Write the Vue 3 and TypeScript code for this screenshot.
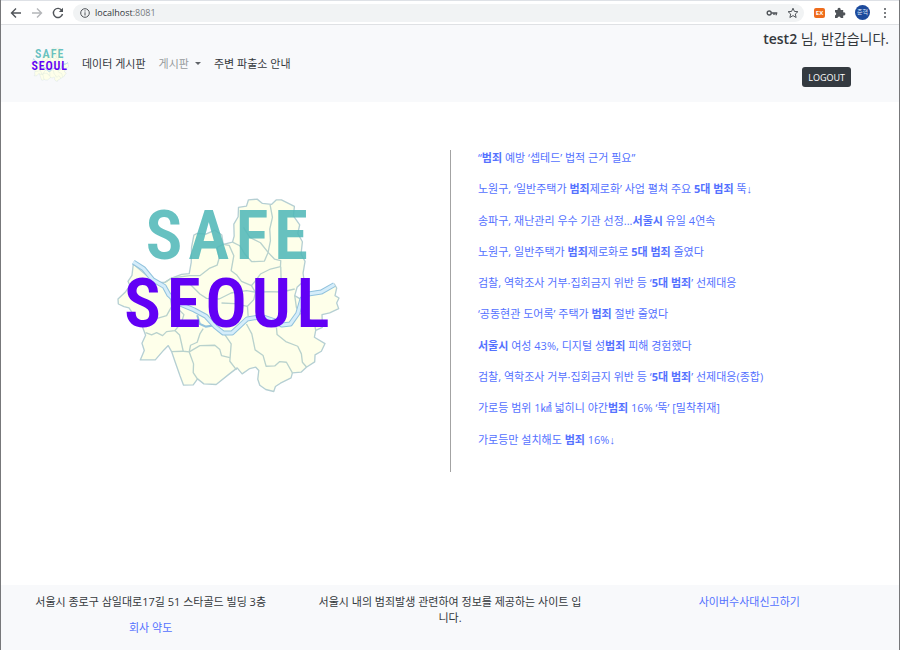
<script setup lang="ts">
import { computed, defineComponent, h, ref } from 'vue'

interface Part {
  text: string
  strong?: boolean
}

/* Splits a headline on *marked* keywords. */
function parse(line: string): Part[] {
  return line
    .split('*')
    .map((text, i) => ({ text, strong: i % 2 === 1 }))
    .filter((p) => p.text.length > 0)
}

const headlines: Part[][] = [
  '“*범죄* 예방 ‘셉테드’ 법적 근거 필요”',
  '노원구, ‘일반주택가 *범죄*제로화’ 사업 펼쳐 주요 *5대 범죄* 뚝↓',
  '송파구, 재난관리 우수 기관 선정...*서울시* 유일 4연속',
  '노원구, 일반주택가 *범죄*제로화로 *5대 범죄* 줄였다',
  '검찰, 역학조사 거부·집회금지 위반 등 ‘*5대 범죄*’ 선제대응',
  '‘공동현관 도어록’ 주택가 *범죄* 절반 줄였다',
  '*서울시* 여성 43%, 디지털 성*범죄* 피해 경험했다',
  '검찰, 역학조사 거부·집회금지 위반 등 ‘*5대 범죄*’ 선제대응(종합)',
  '가로등 범위 1㎢ 넓히니 야간*범죄* 16% ‘뚝’ [밀착취재]',
  '가로등만 설치해도 *범죄* 16%↓',
].map(parse)

const address = ref('localhost:8081')
const host = computed(() => address.value.split(':')[0])
const rest = computed(() => address.value.slice(host.value.length))

const land =
  'M100 250L135 280L165 305L195 305L215 292L245 281L268 279L274 245L275 200L282 163L292 158L318 160L345 148L366 163L370 191L398 184L403 166L402 130L415 108L416 80L440 76L446 57L472 55L488 68L515 71L530 57L545 57L584 77L581 105L600 132L594 158L608 183L604 220L616 242L610 277L613 300L592 320L585 345L610 360L640 334L675 328L704 310L711 322L706 345L718 352L711 367L717 384L690 397L667 402L668 440L648 449L644 470L676 489L665 512L646 523L645 544L620 560L604 575L578 577L574 592L542 608L527 618L522 633L498 627L480 614L474 596L477 570L468 560L450 564L427 580L412 562L385 583L349 612L312 610L293 595L280 613L251 614L240 585L226 545L215 513L205 495L192 508L166 538L121 538L133 510L126 488L137 464L128 440L104 407L87 382L72 378L55 370L54 355L77 333L90 315L84 302L96 284Z'

const districts: string[] = [
  'M195 305L215 292L270 285L300 285L330 262L352 253L358 232L352 200L370 191',
  'M370 191L388 194L402 225L394 270L410 282L425 302L455 315L465 303L482 280L512 265L542 258L543 240L524 235L505 215L482 186L450 170L431 140',
  'M398 184L420 195L435 220L456 243L494 241L505 215L512 180L510 145L518 110L511 72',
  'M270 310L300 340L320 353L358 355L394 337L440 330L470 335L505 333L545 334L585 325',
  'M543 258L544 295L555 334',
  'M455 315L467 335L462 357L443 377L445 407',
  'M365 367L405 369L443 377M470 335L485 350L480 405',
  'M210 345L215 378L200 405L172 413L150 407',
  'M215 378L240 390L252 402L245 425L225 450L200 453L188 465L170 456L155 463L137 456',
  'M225 450L239 463L244 485L250 512L268 514L300 495L345 494L360 507L365 525L390 531',
  'M215 513L250 512M268 514L272 494L292 485L300 460L310 444M268 514L281 550L280 576L294 597',
  'M375 462L394 490L390 542L410 568',
  'M440 430L456 460L466 508L490 525L499 557L525 556L540 543L560 545L578 577',
  'M530 440L532 462L558 483L594 497L605 520L608 545L621 560',
  'M585 345L590 380L600 398L644 425L648 449',
]

const river =
  'M100 244L131 264L158 297L193 317L207 343L235 368L283 388L318 407L346 438L370 457L397 457L442 415L487 408L520 419L546 433L572 430L594 399L607 354L626 340L665 334L704 312'

/* Seoul district map with the wordmark on top, shared by header and main view. */
const SafeSeoul = defineComponent({
  name: 'SafeSeoul',
  setup() {
    return () =>
      h('svg', { viewBox: '48 10 676 630', role: 'img', 'aria-label': 'SAFE SEOUL' }, [
        h('path', { d: land, fill: '#feffea', stroke: '#b5cfd3', 'stroke-width': 4, 'stroke-linejoin': 'round' }),
        ...districts.map((d) =>
          h('path', { d, fill: 'none', stroke: '#b9d2cd', 'stroke-width': 4, 'stroke-linejoin': 'round' }),
        ),
        h('path', { d: 'M292 404L300 430L318 438L346 434', fill: 'none', stroke: '#91c2dd', 'stroke-width': 6 }),
        h('path', { d: river, fill: 'none', stroke: '#91c2dd', 'stroke-width': 15, 'stroke-linejoin': 'round' }),
        h('path', { d: river, fill: 'none', stroke: '#d5edfa', 'stroke-width': 9, 'stroke-linejoin': 'round' }),
        h(
          'g',
          {
            'font-family': '"Roboto Condensed", "Liberation Sans Narrow", Roboto, sans-serif',
            'font-weight': 600,
            'font-size': 208,
            'text-anchor': 'middle',
          },
          [
            h('text', { x: '192 327 457 574', y: 236, fill: '#50b8b8', 'fill-opacity': 0.87 }, 'SAFE'),
            h('text', { x: '128 252 379 514 640', y: 440, fill: '#6200f5' }, 'SEOUL'),
          ],
        ),
      ])
  },
})
</script>

<template>
  <div class="window">
    <div class="toolbar">
      <button class="tool" type="button" aria-label="뒤로">
        <svg width="12" height="12" viewBox="0 0 12 12"><path d="M11 6H1.5M6 1.5L1.5 6L6 10.5" /></svg>
      </button>
      <button class="tool faded" type="button" aria-label="앞으로">
        <svg width="12" height="12" viewBox="0 0 12 12"><path d="M1 6H10.5M6 1.5L10.5 6L6 10.5" /></svg>
      </button>
      <button class="tool" type="button" aria-label="새로고침">
        <svg width="12" height="12" viewBox="0 0 12 12"><path d="M9.8 3.3A4.6 4.6 0 1 0 10.5 7" /><path class="solid" d="M11 .8V5H6.8Z" /></svg>
      </button>
      <div class="omnibox">
        <svg class="info" width="10" height="10" viewBox="0 0 10 10"><circle cx="5" cy="5" r="4.3" /><path d="M5 4.3V7.5M5 2.4V3.5" /></svg>
        <label class="address">
          <span aria-hidden="true">{{ host }}<span class="port">{{ rest }}</span></span>
          <input v-model="address" class="entry" type="text" aria-label="주소" />
        </label>
        <button class="tool" type="button" aria-label="비밀번호">
          <svg width="12" height="12" viewBox="0 0 12 12"><circle cx="3.2" cy="6" r="2" /><path d="M5.2 6H11.3M8 6V8M10.2 6V8.3" /></svg>
        </button>
        <button class="tool" type="button" aria-label="북마크">
          <svg width="12" height="12" viewBox="0 0 12 12"><path class="thin" d="M6 1.2L7.4 4.4L10.9 4.7L8.3 7L9.1 10.5L6 8.6L2.9 10.5L3.7 7L1.1 4.7L4.6 4.4Z" /></svg>
        </button>
      </div>
      <div class="extras">
        <button class="extension" type="button">EX</button>
        <button class="tool" type="button" aria-label="확장 프로그램">
          <svg width="12" height="12" viewBox="0 0 12 12"><path class="solid" d="M1 3H3.6A1.6 1.6 0 1 1 6.6 3H9.2V5.4A1.6 1.6 0 1 1 9.2 8.4V11H6.7A1.6 1.6 0 0 0 3.5 11H1V8.4A1.6 1.6 0 0 0 1 5.3Z" /></svg>
        </button>
        <button class="avatar" type="button">준혁</button>
        <button class="tool" type="button" aria-label="메뉴">
          <svg width="12" height="12" viewBox="0 0 12 12"><circle class="dot" cx="6" cy="2" r="1" /><circle class="dot" cx="6" cy="6" r="1" /><circle class="dot" cx="6" cy="10" r="1" /></svg>
        </button>
      </div>
    </div>

    <header class="header">
      <nav class="nav">
        <a class="brand" href="#"><SafeSeoul class="mark" /></a>
        <a href="#">데이터 게시판</a>
        <a class="dropdown" href="#">게시판<span class="caret"></span></a>
        <a href="#">주변 파출소 안내</a>
      </nav>
      <div class="account">
        <p class="greeting"><strong>test2</strong> 님, 반갑습니다.</p>
        <button class="logout" type="button">LOGOUT</button>
      </div>
    </header>

    <main class="main">
      <div class="hero"><SafeSeoul class="map" /></div>
      <ul class="news">
        <li v-for="(parts, i) in headlines" :key="i">
          <a href="#"><template v-for="(p, j) in parts" :key="j"><b v-if="p.strong">{{ p.text }}</b><template v-else>{{ p.text }}</template></template></a>
        </li>
      </ul>
    </main>

    <footer class="footer">
      <div class="column">
        <p>서울시 종로구 삼일대로17길 51 스타골드 빌딩 3층</p>
        <a href="#">회사 약도</a>
      </div>
      <div class="column">
        <p>서울시 내의 범죄발생 관련하여 정보를 제공하는 사이트 입니다.</p>
      </div>
      <div class="column">
        <a href="#">사이버수사대신고하기</a>
      </div>
    </footer>
  </div>
</template>

<style>
body {
  margin: 0;
  background: #fff;
}
</style>

<style scoped>
.window {
  display: flex;
  flex-direction: column;
  box-sizing: border-box;
  min-height: 100vh;
  border-left: 1px solid #77787a;
  border-right: 1px solid #77787a;
  font-family: "Open Sans", "Liberation Sans", "Noto Sans CJK KR", sans-serif;
  font-size: 11px;
  line-height: 16px;
  color: #34383c;
}

a {
  color: #5471ff;
  text-decoration: none;
}

p {
  margin: 0;
}

button {
  padding: 0;
  border: 0;
  background: none;
  font-family: inherit;
}

.toolbar {
  display: flex;
  align-items: center;
  gap: 9px;
  box-sizing: border-box;
  height: 25px;
  padding: 0 8px 0 9px;
  border-top: 1px solid #dee1e6;
  border-bottom: 1px solid #dfe1e4;
}

.tool {
  display: flex;
  flex: none;
}

.tool svg,
.info {
  fill: none;
  stroke: #505459;
  stroke-width: 1.4;
}

.info {
  stroke-width: 1;
}

.faded svg {
  stroke: #b4b6b9;
}

.tool .thin {
  stroke-width: 1;
}

.tool .solid,
.tool .dot {
  fill: #505459;
  stroke: none;
}

.omnibox {
  display: flex;
  flex: 1;
  align-items: center;
  gap: 9px;
  height: 18px;
  padding: 0 5px 0 7px;
  border-radius: 9px;
  background: #f1f3f4;
}

.extras {
  display: flex;
  align-items: center;
  gap: 9px;
  padding-left: 1px;
}

.address {
  position: relative;
  display: block;
  flex: 1;
  margin-left: -4px;
  font-size: 9px;
}

.port {
  color: #777b80;
}

.entry {
  position: absolute;
  inset: 0;
  width: 100%;
  padding: 0;
  border: 0;
  outline: 0;
  background: none;
  color: transparent;
  font: inherit;
}

.extension {
  width: 11px;
  height: 10px;
  border-radius: 2px;
  background: #ee6c1c;
  color: #fff;
  font-size: 6px;
  line-height: 10px;
  font-weight: 700;
}

.avatar {
  width: 15px;
  height: 15px;
  border-radius: 50%;
  background: #1d4a9c;
  color: #dce6f8;
  font-size: 6px;
  line-height: 15px;
  white-space: nowrap;
}

.header {
  display: flex;
  justify-content: space-between;
  box-sizing: border-box;
  min-height: 77px;
  padding-left: 29px;
  background: #f8f9fb;
}

.nav {
  display: flex;
  align-items: center;
  gap: 13px;
}

.nav a {
  color: #34383c;
}

.brand,
.mark {
  display: block;
}

.mark {
  width: 39px;
  height: 37px;
}

.nav .dropdown {
  display: flex;
  align-items: center;
  gap: 6px;
  color: #96999c;
}

.caret {
  border: 3px solid transparent;
  border-top-color: #606469;
  border-bottom: 0;
}

.account {
  display: flex;
  flex-direction: column;
  align-items: flex-end;
  gap: 18px;
  padding: 4px 10px 0 0;
}

.greeting {
  font-size: 14px;
  line-height: 20px;
}

.greeting strong {
  font-weight: 600;
}

.logout {
  height: 20px;
  margin-right: 38px;
  padding: 0 6px;
  border-radius: 3px;
  background: #343a40;
  color: #fff;
  font-size: 9px;
}

.main {
  display: grid;
  grid-template-columns: 1fr 1fr;
  flex: 1;
  align-items: start;
  padding: 48px 0;
}

.hero {
  display: flex;
  justify-content: center;
  padding-top: 34px;
}

.map {
  width: 225px;
  height: 210px;
  margin-left: 6px;
}

.news {
  display: grid;
  grid-template-rows: repeat(10, 1fr);
  box-sizing: border-box;
  min-height: 322px;
  margin: 0;
  padding: 0 12px 9px 27px;
  border-left: 1px solid #a3a3a3;
  list-style: none;
}

.footer {
  display: grid;
  grid-template-columns: repeat(3, 1fr);
  box-sizing: border-box;
  min-height: 65px;
  padding: 9px 0 13px;
  background: #f8f9fb;
  text-align: center;
}

.column {
  display: flex;
  flex-direction: column;
  align-items: center;
  gap: 10px;
  padding: 0 14px;
}
</style>
